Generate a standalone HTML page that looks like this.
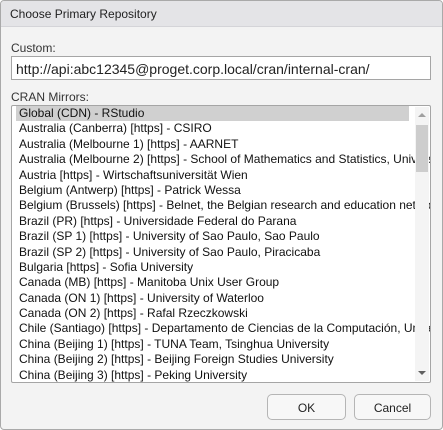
<!DOCTYPE html><html><head><style>
body{margin:0;width:443px;height:430px;overflow:hidden;background:#fff;font-family:"Liberation Sans",sans-serif;}
.win{position:absolute;left:0;top:0;width:441px;height:428px;border:1px solid #a9a9a9;border-radius:4px;background:#f3f3f3;overflow:hidden}
.tb{height:25px;background:#e4e4e7;border-bottom:1px solid #d4d4d8;font-size:12px;line-height:26px;padding-left:9px;color:#222}
.lbl{position:absolute;left:10px;font-size:12px;color:#333}
.inp{position:absolute;left:10px;top:55px;height:24px;border:1px solid #a5a5a5;background:#fff;font-size:14px;line-height:24px;padding-left:4px;box-sizing:border-box;width:420px;color:#222}
.list{position:absolute;left:10px;top:104px;width:420px;height:278px;border:1px solid #a5a5a5;border-radius:2px;background:#fff;box-sizing:border-box;overflow:hidden}
.rows{position:absolute;left:4px;top:0px;width:393px}
.r{height:15.4px;line-height:15px;font-size:12px;white-space:nowrap;padding-left:3px;color:#111}
.r.s{background:#d0d0d0}
.sb{position:absolute;right:1px;top:1px;width:14px;bottom:1px;background:#f4f4f4}
.th{position:absolute;left:1px;top:18px;width:12px;height:47px;background:#cdcdcd}
.btn{position:absolute;top:393px;height:26px;border:1px solid #b5b5b5;border-radius:5px;background:#f7f7f7;font-size:12px;text-align:center;line-height:26px;color:#222;box-sizing:border-box}
</style></head><body><div class="win">
<div class="tb">Choose Primary Repository</div>
<div class="lbl" style="top:40px">Custom:</div>
<div class="inp">http://api:abc12345@proget.corp.local/cran/internal-cran/</div>
<div class="lbl" style="top:89px">CRAN Mirrors:</div>
<div class="list"><div class="rows">
<div class="r s">Global (CDN) - RStudio</div>
<div class="r">Australia (Canberra) [https] - CSIRO</div>
<div class="r">Australia (Melbourne 1) [https] - AARNET</div>
<div class="r">Australia (Melbourne 2) [https] - School of Mathematics and Statistics, University of Melbourne</div>
<div class="r">Austria [https] - Wirtschaftsuniversität Wien</div>
<div class="r">Belgium (Antwerp) [https] - Patrick Wessa</div>
<div class="r">Belgium (Brussels) [https] - Belnet, the Belgian research and education network</div>
<div class="r">Brazil (PR) [https] - Universidade Federal do Parana</div>
<div class="r">Brazil (SP 1) [https] - University of Sao Paulo, Sao Paulo</div>
<div class="r">Brazil (SP 2) [https] - University of Sao Paulo, Piracicaba</div>
<div class="r">Bulgaria [https] - Sofia University</div>
<div class="r">Canada (MB) [https] - Manitoba Unix User Group</div>
<div class="r">Canada (ON 1) [https] - University of Waterloo</div>
<div class="r">Canada (ON 2) [https] - Rafal Rzeczkowski</div>
<div class="r">Chile (Santiago) [https] - Departamento de Ciencias de la Computación, Universidad</div>
<div class="r">China (Beijing 1) [https] - TUNA Team, Tsinghua University</div>
<div class="r">China (Beijing 2) [https] - Beijing Foreign Studies University</div>
<div class="r">China (Beijing 3) [https] - Peking University</div>
</div>
<div class="sb"><div style="position:absolute;left:3px;top:6px;border:4px solid transparent;border-bottom:4px solid #a0a0a0;border-top:0"></div><div class="th"></div><div style="position:absolute;left:3px;bottom:6px;border:4px solid transparent;border-top:4px solid #606060;border-bottom:0"></div></div>
</div>
<div class="btn" style="left:266px;width:79px">OK</div>
<div class="btn" style="left:353px;width:77px">Cancel</div>
</div></body></html>
